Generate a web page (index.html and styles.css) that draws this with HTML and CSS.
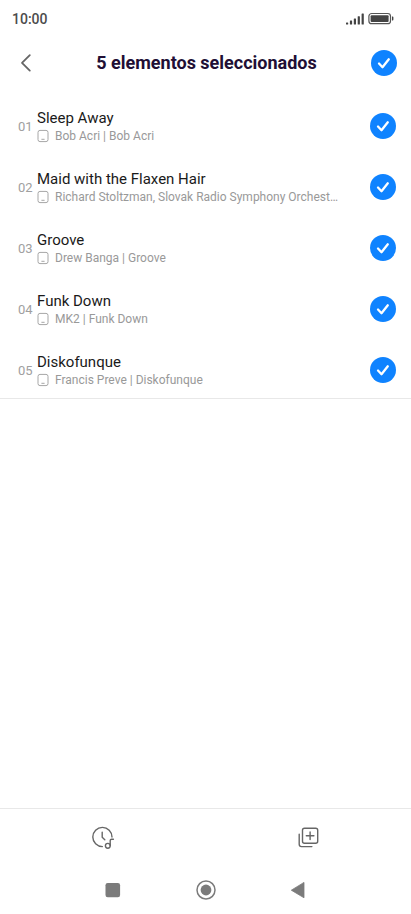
FILE: index.html
```html
<!DOCTYPE html>
<html lang="es">
<head>
<meta charset="utf-8">
<meta name="viewport" content="width=device-width, initial-scale=1">
<title>5 elementos seleccionados</title>
<link rel="stylesheet" href="styles.css">
</head>
<body>
<svg width="0" height="0" class="defs" aria-hidden="true">
  <symbol id="tick" viewBox="0 0 26 26"><path d="M8 13.5 11.5 17.2 17.8 9.3" fill="none" stroke="#fff" stroke-width="2.3" stroke-linecap="round" stroke-linejoin="round"/></symbol>
  <symbol id="phone" viewBox="0 0 12 14"><rect x="1" y="1.4" width="10" height="11.2" rx="2" fill="none" stroke="#a6a6a6"/><path d="M4.4 10.3h3.2" stroke="#a6a6a6"/></symbol>
</svg>
<div class="screen">
  <div class="status">
    <span>10:00</span>
    <svg width="50" height="14" viewBox="0 0 50 14" aria-hidden="true">
      <g fill="#444"><rect x="1" y="10.4" width="2.2" height="2" rx=".5"/><rect x="4.9" y="8.6" width="2.2" height="3.8" rx=".5"/><rect x="8.8" y="6.6" width="2.2" height="5.8" rx=".5"/><rect x="12.7" y="4.2" width="2.2" height="8.2" rx=".5"/><rect x="16.6" y="1.6" width="2.2" height="10.8" rx=".5"/><rect x="25.6" y="3.2" width="18" height="6.8" rx="1"/><path d="M47 4.6h.6q.8 0 .8 1v2q0 1-.8 1H47z"/></g>
      <rect x="23.9" y="1.5" width="21.6" height="10.2" rx="2.8" fill="none" stroke="#555" stroke-width="1.2"/>
    </svg>
  </div>
  <header class="header">
    <button class="icon-button" aria-label="Atrás"><svg width="20" height="20" viewBox="0 0 20 20"><path d="M13.8 2.2 6 9.8l7.8 7.8" fill="none" stroke="#666" stroke-width="1.8" stroke-linecap="round" stroke-linejoin="round"/></svg></button>
    <h1>5 elementos seleccionados</h1>
    <label class="check"><input type="checkbox" checked aria-label="Seleccionar todo"><svg><use href="#tick"/></svg></label>
  </header>
  <main>
    <ul class="songs">
      <li><label class="song"><span class="number">01</span><span class="info"><span class="title">Sleep Away</span><span class="detail"><svg><use href="#phone"/></svg><span class="artist">Bob Acri | Bob Acri</span></span></span><span class="check"><input type="checkbox" checked><svg><use href="#tick"/></svg></span></label></li>
      <li><label class="song"><span class="number">02</span><span class="info"><span class="title">Maid with the Flaxen Hair</span><span class="detail"><svg><use href="#phone"/></svg><span class="artist">Richard Stoltzman, Slovak Radio Symphony Orchest…</span></span></span><span class="check"><input type="checkbox" checked><svg><use href="#tick"/></svg></span></label></li>
      <li><label class="song"><span class="number">03</span><span class="info"><span class="title">Groove</span><span class="detail"><svg><use href="#phone"/></svg><span class="artist">Drew Banga | Groove</span></span></span><span class="check"><input type="checkbox" checked><svg><use href="#tick"/></svg></span></label></li>
      <li><label class="song"><span class="number">04</span><span class="info"><span class="title">Funk Down</span><span class="detail"><svg><use href="#phone"/></svg><span class="artist">MK2 | Funk Down</span></span></span><span class="check"><input type="checkbox" checked><svg><use href="#tick"/></svg></span></label></li>
      <li><label class="song"><span class="number">05</span><span class="info"><span class="title">Diskofunque</span><span class="detail"><svg><use href="#phone"/></svg><span class="artist">Francis Preve | Diskofunque</span></span></span><span class="check"><input type="checkbox" checked><svg><use href="#tick"/></svg></span></label></li>
    </ul>
  </main>
  <div class="toolbar">
    <button aria-label="Reproducir a continuación"><svg width="24" height="24" viewBox="0 0 24 24" fill="none" stroke="#666" stroke-width="1.4" stroke-linecap="round" stroke-linejoin="round"><path d="M21 11A9.6 9.6 0 1 0 11.4 20.6M11.2 6.2v5l2.6 2.5M19.2 19.6v-5q0-1.4 1.4-1.4h1.8"/><circle cx="16.8" cy="19.8" r="2.4"/></svg></button>
    <button aria-label="Añadir a lista"><svg width="24" height="24" viewBox="0 0 24 24" fill="none" stroke="#666" stroke-width="1.4" stroke-linecap="round" stroke-linejoin="round"><rect x="6.5" y="2.2" width="15.2" height="15" rx="2"/><path d="M14.1 6v7.6M10.3 9.8h7.6M3.2 8.3v10q0 2.3 2.3 2.3h10.4"/></svg></button>
  </div>
  <nav class="system" aria-label="Sistema">
    <button aria-label="Recientes"><svg width="20" height="20" viewBox="0 0 20 20"><rect x="2.5" y="3" width="14.6" height="14.2" rx="2.2" fill="#7b7b7b"/></svg></button>
    <button aria-label="Inicio"><svg width="20" height="20" viewBox="0 0 20 20"><circle cx="10" cy="10" r="9" fill="none" stroke="#7b7b7b" stroke-width="1.5"/><circle cx="10" cy="10" r="5.4" fill="#7b7b7b"/></svg></button>
    <button aria-label="Volver"><svg width="20" height="20" viewBox="0 0 20 20"><path d="M2.3 10.2 15 2.4v15.4z" fill="#7b7b7b" stroke="#7b7b7b" stroke-width=".8" stroke-linejoin="round"/></svg></button>
  </nav>
</div>
</body>
</html>
```
FILE: styles.css
```css
* { box-sizing: border-box; }
body { margin: 0; background: #fff; color: #1a1a1a; font-family: Roboto, sans-serif; }
button { display: grid; place-items: center; padding: 0; border: 0; background: none; }
svg { display: block; }
.defs { position: absolute; }
.screen { display: flex; flex-direction: column; min-height: 100vh; }
.status { display: flex; align-items: center; justify-content: space-between; height: 38px; padding: 0 16px 0 12px; color: #4c4c4c; font-size: 14px; font-weight: 500; }
.header { display: flex; align-items: center; height: 50px; padding: 0 14px 0 16px; }
.header h1 { flex: 1; margin: 0; padding-left: 6px; color: #210f35; font-size: 18px; font-weight: 700; line-height: 24px; text-align: center; }
.icon-button { width: 20px; height: 40px; }
.check { display: grid; flex: none; width: 26px; height: 26px; }
.check input { grid-area: 1 / 1; appearance: none; width: 26px; height: 26px; margin: 0; border: 2px solid #ccc; border-radius: 50%; }
.check input:checked { border: 0; background: #0f83ff; }
.check svg { grid-area: 1 / 1; width: 26px; height: 26px; pointer-events: none; }
.check input:not(:checked) + svg { visibility: hidden; }
main { flex: 1; }
.songs { display: flex; flex-direction: column; gap: 25px; margin: 0; padding: 20px 0 10px; border-bottom: 1px solid #e8e8e8; list-style: none; }
.song { display: flex; align-items: center; padding: 0 15px 0 18px; }
.number { width: 19px; color: #a0a0a0; font-size: 13px; }
.info { flex: 1; min-width: 0; padding-right: 8px; }
.title { display: block; font-size: 15px; line-height: 20px; }
.detail { display: flex; align-items: center; gap: 6px; color: #999; font-size: 12px; line-height: 16px; }
.detail svg { flex: none; width: 12px; height: 14px; }
.artist { overflow: hidden; text-overflow: ellipsis; white-space: nowrap; }
.toolbar { display: grid; grid-template-columns: 1fr 1fr; height: 58px; border-top: 1px solid #e8e8e8; }
.system { display: flex; align-items: center; justify-content: center; gap: 73px; height: 48px; }
```
